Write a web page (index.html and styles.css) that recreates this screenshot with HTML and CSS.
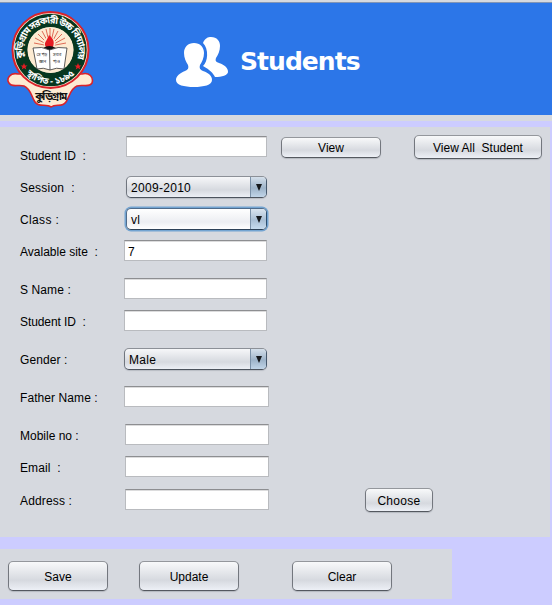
FILE: index.html
```html
<!DOCTYPE html>
<html lang="en">
<head>
<meta charset="utf-8">
<title>Students</title>
<link rel="stylesheet" href="styles.css">
</head>
<body>
<header class="banner">
  <svg class="crest" width="88" height="100" viewBox="6 9 88 100">
    <path d="M18 74C10 72 6 79 9 83C12 88 18 84 24 86C31 89 31 96 35 102C39 108 46 103 51 107C56 103 62 108 66 102C70 96 70 89 77 86C83 84 89 88 92 83C94 77 89 72 82 74Z" fill="#fdebd2" stroke="#d9232b" stroke-width="1.6"/>
    <circle cx="50.5" cy="50" r="38" fill="#fdebd2" stroke="#d9232b" stroke-width="2"/>
    <circle cx="50.5" cy="50" r="29.5" fill="none" stroke="#06371f" stroke-width="13.500"/>
    <circle cx="50.5" cy="50" r="23" fill="#fdebd2"/>
    <g stroke="#df6a55" stroke-width="1">
      <path d="M50 46L34 43M50 46L35 38M50 46L38 34M50 46L42 31M50 46L46 29M50 46V28M50 46L54 29M50 46L58 31M50 46L62 34M50 46L65 38M50 46L66 43"/>
    </g>
    <circle cx="49.500" cy="43" r="6" fill="#fdebd2"/>
    <path d="M49 35C55 40 54 43 53 47H46C43 43 47 41 49 35Z" fill="#e51c23"/>
    <path d="M43 48Q49 44 56 48L53 51H46Z" fill="#111"/>
    <path d="M33 48Q42 46 49.500 50Q58 46 67 48L64 69Q56 67 50 70Q43 67 37 69Z" fill="#fff" stroke="#333" stroke-width=".8"/>
    <path d="M49.500 50L50 70" stroke="#333" stroke-width=".8"/>
    <path id="arc-top" d="M25.500 64A28 28 0 1 1 75.500 64" fill="none"/>
    <path id="arc-low" d="M19 63A34 34 0 0 0 82 63" fill="none"/>
    <text class="crest-ring"><textPath href="#arc-top" startOffset="50%" text-anchor="middle" textLength="102">কুড়িগ্রাম সরকারী উচ্চ বিদ্যালয়</textPath></text>
    <text class="crest-ring low"><textPath href="#arc-low" startOffset="50%" text-anchor="middle" textLength="54">স্থাপিত - ১৮৯৫</textPath></text>
    <text class="crest-book" x="36.500" y="55.500">সে পড়</text><text class="crest-book" x="39" y="63">জ্ঞান</text>
    <text class="crest-book" x="53" y="55.500">সবার</text><text class="crest-book" x="53" y="63">পাও</text>
    <text class="crest-name" x="50.500" y="100" text-anchor="middle" textLength="32">কুড়িগ্রাম</text>
    <path id="star" d="M24 63L25 65.500H27.500L25.500 67L26.300 69.500L24 68L21.700 69.500L22.500 67L20.500 65.500H23Z" fill="#e51c23"/>
    <use href="#star" x="54"/>
  </svg>
  <svg class="people" width="54" height="52" viewBox="175 36 54 52" fill="#fff">
    <path d="M203 43C205 38 208 37 211 37C217 37 220 41 220 46C220 51 218 55 216 58C215 61 216 62 219 63C225 65 228 68 228 72C228 75 222 77 215 77C213 73 210 70 203 66C208 62 209 49 203 43Z"/>
    <path d="M194 43C200 43 204 47 204 53C204 58 202 62 200 65C199 68 200 70 203 71C209 73 212 76 212 80C212 85 204 87 194 87C184 87 176 85 176 80C176 76 180 73 185 71C188 70 189 68 188 65C186 62 184 58 184 53C184 47 188 43 194 43Z"/>
  </svg>
  <h1 class="title">Students</h1>
</header>
<main class="form">
  <div class="row first">
    <label class="label id">Student ID &nbsp;:</label><span class="field x2 w141"></span>
    <button class="btn view">View</button><button class="btn view-all">View All &nbsp;Student</button>
  </div>
  <div class="row"><label class="label session">Session &nbsp;:</label><span class="combo x2 w141">2009-2010<i class="arrow"></i></span></div>
  <div class="row"><label class="label class">Class :</label><span class="combo focused x2 w141">vl<i class="arrow"></i></span></div>
  <div class="row tall"><label class="label">Avalable site &nbsp;:</label><span class="field w143">7</span></div>
  <div class="row"><label class="label s-name">S Name :</label><span class="field w143"></span></div>
  <div class="row tall"><label class="label id">Student ID &nbsp;:</label><span class="field w143"></span></div>
  <div class="row tall"><label class="label gender">Gender :</label><span class="combo w143">Male<i class="arrow"></i></span></div>
  <div class="row tall"><label class="label father">Father Name :</label><span class="field w145"></span></div>
  <div class="row"><label class="label mobile">Mobile no :</label><span class="field x1 w144"></span></div>
  <div class="row mid"><label class="label email">Email &nbsp;:</label><span class="field x1 w144"></span></div>
  <div class="row"><label class="label address">Address :</label><span class="field x1 w144"></span><button class="btn choose">Choose</button></div>
</main>
<footer class="actions">
  <button class="btn big">Save</button>
  <button class="btn big update">Update</button>
  <button class="btn big clear">Clear</button>
</footer>
</body>
</html>
```
FILE: styles.css
```css
* { box-sizing: border-box; }
body {
  margin: 0;
  width: 552px;
  height: 605px;
  overflow: hidden;
  background: #ccccff;
  color: #000;
  font: 12px/16px "Liberation Sans", Arial, sans-serif;
}
.banner {
  display: flex;
  align-items: flex-start;
  height: 121px;
  border-top: 2px solid #d6d9df;
  border-bottom: 6px solid #d6d9df;
  background: #2c76e8;
  box-shadow: inset 0 1px #8295b5;
}
.crest { margin: 7px 0 0 6px; }
.people { margin: 34px 0 0 81px; }
.title {
  margin: 44px 0 0 11px;
  color: #fff;
  font: bold 25px/32px "DejaVu Sans", Verdana, sans-serif;
  letter-spacing: -.95px;
}
.crest-ring { fill: #fff; font: bold 9.5px "Noto Sans Bengali", sans-serif; }
.crest-ring.low { font-size: 9px; }
.crest-book { fill: #222; font: 4px "Noto Sans Bengali", sans-serif; }
.crest-name { fill: #111; font: bold 10.5px "Noto Sans Bengali", sans-serif; }
.form {
  width: 550px;
  height: 410px;
  margin-top: 6px;
  padding: 9px 0 0 20px;
  background: #d6d9df;
}
.row { display: flex; align-items: flex-start; height: 32px; }
.row.first { height: 40px; }
.row.tall { height: 38px; }
.row.mid { height: 33px; }
.label { width: 104px; flex: none; margin-top: 4px; white-space: nowrap; }
.first .label { margin-top: 12px; }
.id { letter-spacing: -.08px; }
.session { letter-spacing: .22px; }
.class { letter-spacing: .35px; }
.s-name, .email { letter-spacing: .1px; }
.gender, .father { letter-spacing: .08px; }
.address { letter-spacing: .15px; }
.field {
  flex: none;
  height: 21px;
  padding: 3px;
  border: 1px solid #b9bbbf;
  border-top-color: #8d8e91;
  background: #fff;
  box-shadow: inset 0 1px #dcdcdd;
}
.x1 { margin-left: 1px; }
.x2 { margin-left: 2px; }
.w141 { width: 141px; }
.w143 { width: 143px; }
.w144 { width: 144px; }
.w145 { width: 145px; }
.combo {
  display: flex;
  justify-content: space-between;
  flex: none;
  height: 22px;
  padding-left: 4px;
  overflow: hidden;
  border: 1px solid #70757e;
  border-color: #8c9097 #46586c #4c535d #70757e;
  border-radius: 5px;
  background: linear-gradient(#f6f7f9, #d6d9df 65%, #eceff5);
  box-shadow: 0 1px 1px #b8bcc4;
  line-height: 22px;
  letter-spacing: .3px;
}
.focused {
  border-color: #4f6c8c #2d4f70 #2d4258 #4f6c8c;
  background: linear-gradient(#fff, #eceef2 65%, #fff);
  box-shadow: 0 0 0 1.5px #73a4d1;
}
.arrow {
  display: flex;
  justify-content: center;
  width: 16px;
  border-left: 1px solid #7b91a8;
  background: linear-gradient(#d5e0eb, #9db3c9 55%, #c1d5e8);
}
.focused .arrow { background: linear-gradient(#dae5ef, #a9bfd5 55%, #c6dbee); }
.arrow::before {
  content: "";
  height: 0;
  margin-top: 7px;
  border: 3.5px solid transparent;
  border-top: 7px solid #15181c;
  border-bottom: 0;
}
.btn {
  flex: none;
  padding: 0;
  border: 1px solid #73777e;
  border-color: #94979c #73777e #54585f;
  border-radius: 5px;
  background: linear-gradient(#f8f9fa, #d6d9df 65%, #edf0f6);
  box-shadow: 0 1px 1px #b4b8bf;
  color: #000;
  font: 12px/16px "Liberation Sans", Arial, sans-serif;
}
.view { width: 100px; height: 21px; margin: 1px 0 0 14px; }
.view-all { width: 128px; height: 24px; padding-top: 1px; margin: -1px 0 0 33px; }
.choose { width: 68px; height: 24px; padding-top: 1px; margin: -1px 0 0 96px; letter-spacing: .3px; }
.actions {
  display: flex;
  width: 452px;
  height: 50px;
  margin-top: 12px;
  padding: 12px 8px;
  background: #d6d9df;
}
.big { width: 100px; height: 30px; padding-top: 1px; }
.update { margin-left: 31px; }
.clear { margin-left: 53px; }
```
